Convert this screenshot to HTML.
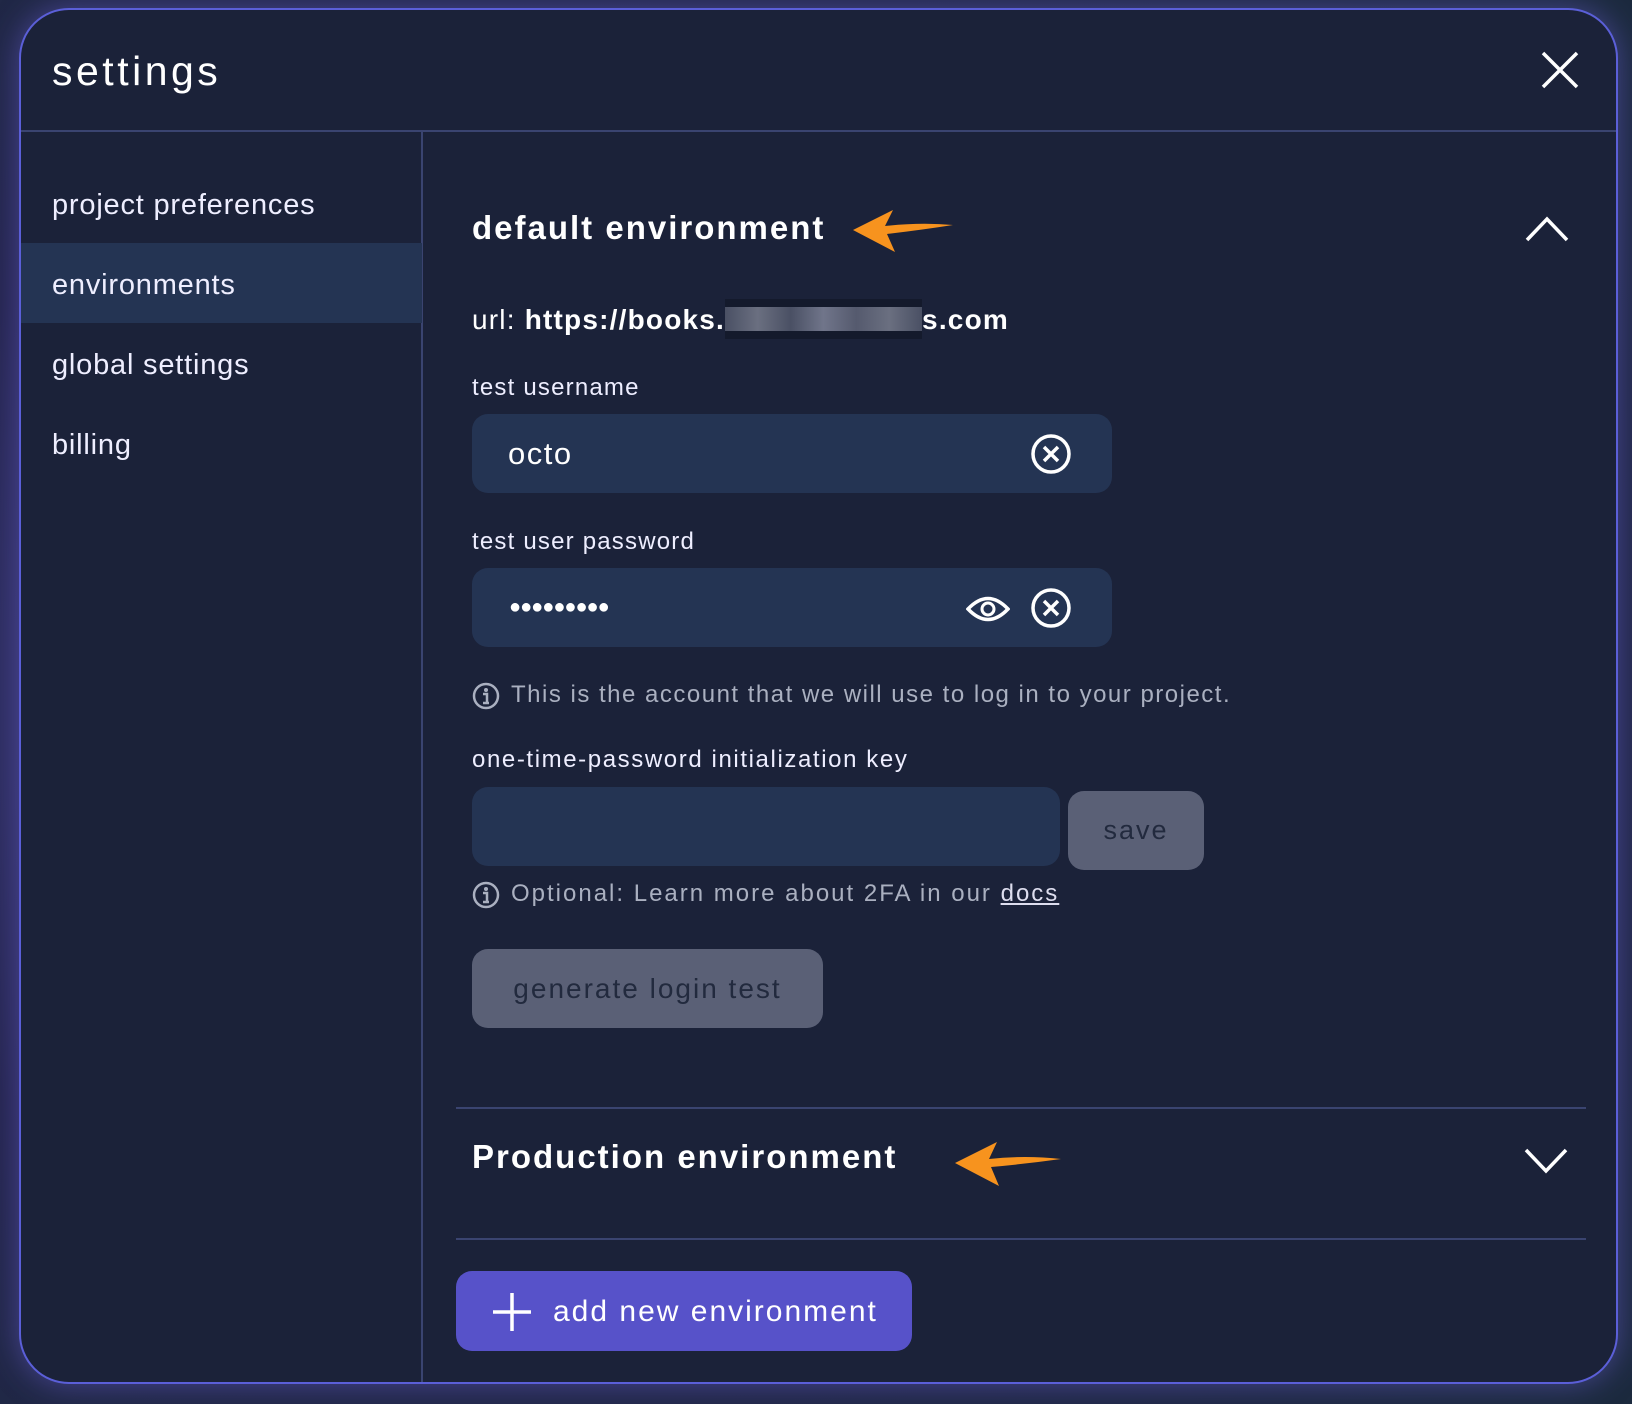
<!DOCTYPE html>
<html><head><meta charset="utf-8"><style>
*{margin:0;padding:0;box-sizing:border-box}
body{width:1632px;height:1404px;overflow:hidden;background:radial-gradient(ellipse at 30% 50%,#3a3a78 0%,#25254f 50%,#1c2a3e 100%);font-family:"Liberation Sans",sans-serif;color:#fff;position:relative}
.panel{position:absolute;left:19px;top:8px;width:1599px;height:1376px;background:#1b2239;border:2px solid #5b5fd8;border-radius:50px;box-shadow:0 0 30px rgba(110,100,220,.5);overflow:hidden}
.a{position:absolute;white-space:nowrap}
.hl{position:absolute;left:0;top:233px;width:401px;height:80px;background:#243453}
.nav{font-size:29px;letter-spacing:.8px;color:#eef}
.inp{position:absolute;background:#243453;border-radius:16px}
.lbl{font-size:24px;letter-spacing:1.2px;color:#eef}
.note{font-size:24px;letter-spacing:1.5px;color:#aab0c0}
</style></head><body>
<div class="panel">
 <div class="a" style="left:31px;top:38px;font-size:41px;letter-spacing:3.5px">settings</div>
 <svg class="a" style="left:1519px;top:40px" width="40" height="40"><path d="M3 3L37 37M37 3L3 37" stroke="#fff" stroke-width="3.5"/></svg>
 <div class="a" style="left:0;top:120px;width:1599px;height:2px;background:#3a4470"></div>
 <div class="a" style="left:400px;top:121px;width:2px;height:1260px;background:#3a4470"></div>
 <div class="hl"></div>
 <div class="a nav" style="left:31px;top:179px">project preferences</div>
 <div class="a nav" style="left:31px;top:259px">environments</div>
 <div class="a nav" style="left:31px;top:339px">global settings</div>
 <div class="a nav" style="left:31px;top:419px">billing</div>

 <div class="a" style="left:451px;top:199px;font-size:33px;font-weight:bold;letter-spacing:2px">default environment</div>
 <svg class="a" style="left:830px;top:198px" width="105" height="46"><path d="M2 22L42 2L34 18Q70 14 102 17Q70 22 36 26L44 44Z" fill="#f7931e"/></svg>
 <svg class="a" style="left:1503px;top:205px" width="46" height="28"><path d="M3 25L23 4L43 25" stroke="#fff" stroke-width="3.5" fill="none"/></svg>

 <div class="a" style="left:451px;top:289px;font-size:28px;letter-spacing:1.2px">url: <b>https://books.</b><span style="display:inline-block;width:197px;height:40px;vertical-align:-10px;background:linear-gradient(90deg,#4a5064,#6a6f80,#4a5064,#70758a,#555a6e,#6a6f80,#4a5064);border-top:8px solid #141a2c;border-bottom:8px solid #141a2c"></span><b>s.com</b></div>

 <div class="a lbl" style="left:451px;top:364px">test username</div>
 <div class="inp" style="left:451px;top:404px;width:640px;height:79px"></div>
 <div class="a" style="left:487px;top:426px;font-size:31px;letter-spacing:1.5px">octo</div>
 <svg class="a" style="left:1008px;top:422px" width="44" height="44"><circle cx="22" cy="22" r="18" stroke="#fff" stroke-width="3.5" fill="none"/><path d="M15 15L29 29M29 15L15 29" stroke="#fff" stroke-width="3.5"/></svg>

 <div class="a lbl" style="left:451px;top:518px">test user password</div>
 <div class="inp" style="left:451px;top:558px;width:640px;height:79px"></div>
 <div class="a" style="left:488px;top:586px;font-size:20px;letter-spacing:-1px">●●●●●●●●●</div>
 <svg class="a" style="left:945px;top:584px" width="44" height="30"><path d="M2 15Q22 -6 42 15Q22 36 2 15Z" stroke="#fff" stroke-width="3.5" fill="none"/><circle cx="22" cy="15" r="6" stroke="#fff" stroke-width="3" fill="none"/></svg>
 <svg class="a" style="left:1008px;top:576px" width="44" height="44"><circle cx="22" cy="22" r="18" stroke="#fff" stroke-width="3.5" fill="none"/><path d="M15 15L29 29M29 15L15 29" stroke="#fff" stroke-width="3.5"/></svg>

 <svg class="a" style="left:451px;top:672px" width="28" height="28"><circle cx="14" cy="14" r="12" stroke="#aab0c0" stroke-width="2.5" fill="none"/><circle cx="14" cy="8" r="2" fill="#aab0c0"/><path d="M11 12H15V21M11 21H17" stroke="#aab0c0" stroke-width="2.5" fill="none"/></svg>
 <div class="a note" style="left:490px;top:671px">This is the account that we will use to log in to your project.</div>

 <div class="a lbl" style="left:451px;top:736px;letter-spacing:1.6px">one-time-password initialization key</div>
 <div class="inp" style="left:451px;top:777px;width:588px;height:79px"></div>
 <div class="a" style="left:1047px;top:781px;width:136px;height:79px;background:#5a6076;border-radius:16px;color:#222a3e;font-size:27px;letter-spacing:2px;text-align:center;line-height:79px">save</div>

 <svg class="a" style="left:451px;top:871px" width="28" height="28"><circle cx="14" cy="14" r="12" stroke="#aab0c0" stroke-width="2.5" fill="none"/><circle cx="14" cy="8" r="2" fill="#aab0c0"/><path d="M11 12H15V21M11 21H17" stroke="#aab0c0" stroke-width="2.5" fill="none"/></svg>
 <div class="a note" style="left:490px;top:870px;letter-spacing:2px">Optional: Learn more about 2FA in our <u style="color:#dde">docs</u></div>

 <div class="a" style="left:451px;top:939px;width:351px;height:79px;background:#5a6076;border-radius:16px;color:#222a3e;font-size:28px;letter-spacing:2px;text-align:center;line-height:79px">generate login test</div>

 <div class="a" style="left:435px;top:1097px;width:1130px;height:2px;background:#3a4470"></div>
 <div class="a" style="left:451px;top:1128px;font-size:33px;font-weight:bold;letter-spacing:2px">Production environment</div>
 <svg class="a" style="left:932px;top:1130px" width="112" height="48"><path d="M2 23L44 2L36 19Q72 15 108 19Q72 24 38 27L46 46Z" fill="#f7931e"/></svg>
 <svg class="a" style="left:1502px;top:1137px" width="46" height="28"><path d="M3 3L23 24L43 3" stroke="#fff" stroke-width="3.5" fill="none"/></svg>
 <div class="a" style="left:435px;top:1228px;width:1130px;height:2px;background:#3a4470"></div>

 <div class="a" style="left:435px;top:1261px;width:456px;height:80px;background:#5752c9;border-radius:16px"></div>
 <svg class="a" style="left:470px;top:1281px" width="42" height="42"><path d="M21 2V40M2 21H40" stroke="#fff" stroke-width="3.5"/></svg>
 <div class="a" style="left:532px;top:1285px;font-size:30px;letter-spacing:2px">add new environment</div>
</div>
</body></html>
